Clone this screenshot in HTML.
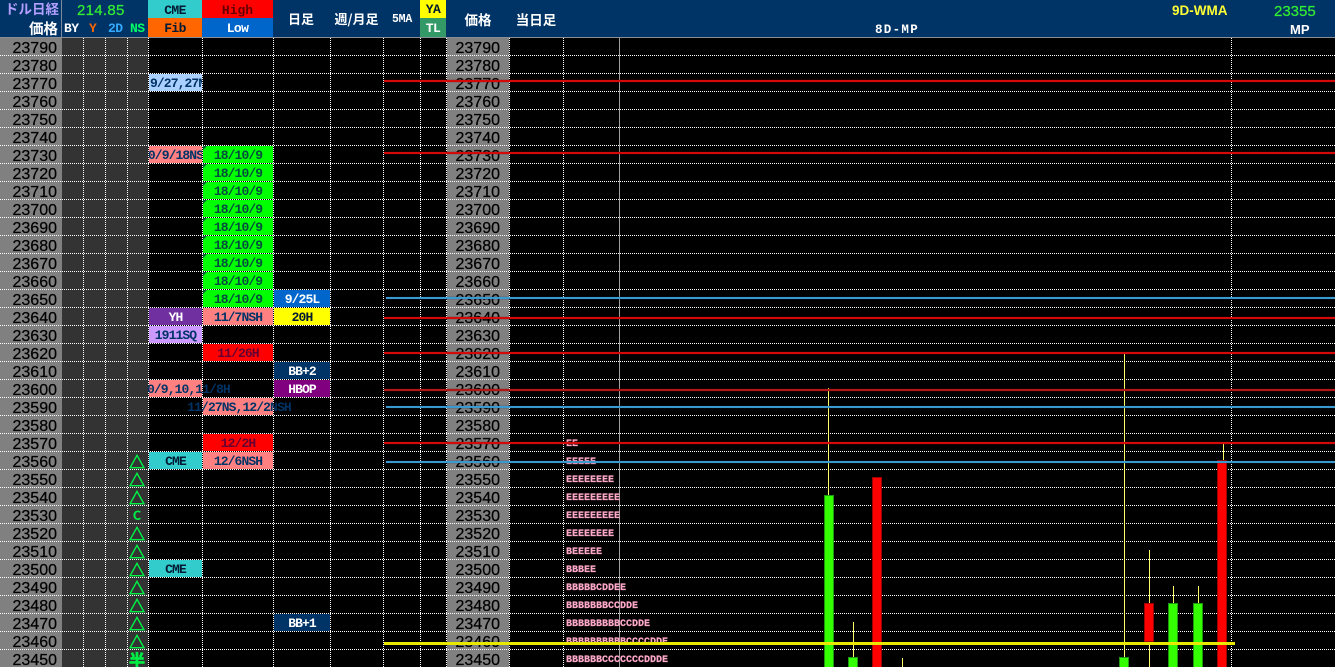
<!DOCTYPE html>
<html lang="ja"><head><meta charset="utf-8"><title>Chart</title>
<style>
html,body{margin:0;padding:0;background:#000}
#p{position:relative;width:1335px;height:667px;overflow:hidden;background:#000;font-family:"Liberation Sans","Noto Sans CJK JP",sans-serif}
#p div{position:absolute}
.hd{left:0;top:0;width:1335px;height:37px;background:#003366;border-bottom:1px solid #8a8f96;box-sizing:content-box}
.pc{top:38px;width:62px;height:629px;background:#808080}
.pr{left:0;width:57px;height:18px;line-height:21px;text-align:right;font-size:16px;color:#000;-webkit-text-stroke:.25px #000}
.pr[style*="left"]{margin-left:-4px}
.l{font:bold 13px/18px "Liberation Mono","Noto Sans CJK JP",monospace;letter-spacing:-.6px;white-space:nowrap;text-align:center}
.c{height:17px;overflow:hidden;font:bold 13px/20px "Liberation Mono",monospace;letter-spacing:-.9px;text-align:center;white-space:nowrap;display:flex;justify-content:center}
.n{color:#003366}.w{color:#fff}.k{color:#001a33}
.g{left:203px;width:70px;background:#00ff00;color:#004d40}
.g::before{content:"";position:absolute;left:0;top:0;border-top:4px solid #006633;border-right:4px solid transparent}
.a{left:149px;width:53px}.b{left:203px;width:70px}.d{left:274px;width:56px}
.pk{background:#ff8080}.rd{background:#ff0000;color:#660033}
.h{left:0;width:1335px;height:1px;background:repeating-linear-gradient(90deg,#fff 0 1px,transparent 1px 2px)}
.v{top:38px;width:1px;height:629px;background:repeating-linear-gradient(180deg,#fff 0 1px,transparent 1px 2px)}
.t{left:124px;width:26px;height:18px;text-align:center;color:#00ee44;font:bold 16px/18px "Noto Sans CJK JP",sans-serif;-webkit-text-stroke:.7px #00ee44}
.m{left:566px;height:18px;margin-top:2px;font:bold 10px/18px "Liberation Mono",monospace;color:#ffa8c8;white-space:nowrap;-webkit-text-stroke:.2px #ffa8c8}
.r{left:384px;width:951px;height:2px;background:#d40a0a;box-shadow:0 0 1px #800}
.bl{left:386px;width:949px;height:2px;background:#3a9ad0;box-shadow:0 0 1px #136}
.wk{width:1px;background:#ffff66}
.cg{width:8px;background:#33ff00;border:1px solid #1f9a10;border-bottom:0}
.cr{width:8px;background:#ff0000;border:1px solid #a00000;border-bottom:0}
</style></head><body><div id="p">
<div class="hd"></div>
<div style="left:61px;top:0;width:1px;height:37px;background:#7a8ba0"></div>
<div style="left:148px;top:0;width:54px;height:18px;background:#33cccc"></div>
<div style="left:148px;top:18px;width:54px;height:19px;background:#ff6600"></div>
<div style="left:202px;top:0;width:71px;height:18px;background:#ff0000"></div>
<div style="left:202px;top:18px;width:71px;height:19px;background:#0066cc"></div>
<div style="left:420px;top:0;width:26px;height:18px;background:#ffff00"></div>
<div style="left:420px;top:18px;width:26px;height:19px;background:#339966"></div>
<div style="left:0;top:1px;width:59px;height:18px;line-height:18px;text-align:right;color:#b4a0ff;font-size:13.5px;font-weight:bold;white-space:nowrap">ドル日経</div>
<div style="left:0;top:21px;width:58px;height:18px;line-height:18px;text-align:right;color:#fff;font-size:14.5px;font-weight:bold">価格</div>
<div style="left:77px;top:2px;height:18px;line-height:18px;color:#33ee33;font-size:15px;letter-spacing:.3px;-webkit-text-stroke:.2px #33ee33">214.85</div>
<div class="l w" style="left:64px;top:20px">BY</div>
<div class="l" style="left:89px;top:20px;color:#ff6600">Y</div>
<div class="l" style="left:108px;top:20px;color:#33aaff">2D</div>
<div class="l" style="left:130px;top:20px;color:#00ff66">NS</div>
<div class="l k" style="left:148px;top:2px;width:54px">CME</div>
<div class="l k" style="left:148px;top:20px;width:54px">Fib</div>
<div class="l" style="left:202px;top:2px;width:71px;color:#660000;letter-spacing:0">High</div>
<div class="l w" style="left:202px;top:20px;width:71px">Low</div>
<div class="l w" style="left:280px;top:10px;width:42px;font-size:13px;font-family:'Noto Sans CJK JP',sans-serif;letter-spacing:0">日足</div>
<div class="l w" style="left:330px;top:10px;width:53px;font-size:13px;font-family:'Noto Sans CJK JP',sans-serif;letter-spacing:0">週/月足</div>
<div class="l w" style="left:384px;top:11px;width:36px;font-size:11.5px;letter-spacing:-.2px">5MA</div>
<div class="l k" style="left:420px;top:1px;width:26px">YA</div>
<div class="l w" style="left:420px;top:20px;width:26px">TL</div>
<div class="l w" style="left:450px;top:10px;width:56px;font-size:13.5px;font-family:'Noto Sans CJK JP',sans-serif;letter-spacing:0">価格</div>
<div class="l w" style="left:510px;top:10px;width:52px;font-size:13.5px;font-family:'Noto Sans CJK JP',sans-serif;letter-spacing:0">当日足</div>
<div class="l w" style="left:860px;top:21px;width:74px;font-size:12.5px;letter-spacing:1.3px">8D-MP</div>
<div style="left:1172px;top:2px;height:18px;line-height:18px;font-size:13.5px;font-weight:bold;color:#ffff33;white-space:nowrap">9D-WMA</div>
<div style="left:1274px;top:3px;height:18px;line-height:18px;color:#33ee33;font-size:15px;-webkit-text-stroke:.2px #33ee33">23355</div>
<div style="left:1290px;top:21px;height:18px;line-height:18px;font-size:13px;font-weight:bold;color:#fff">MP</div>

<div class="pc" style="left:0"></div>
<div class="pc" style="left:447px"></div>
<div style="left:62px;top:38px;width:86px;height:629px;background:#333"></div>
<div style="left:619px;top:38px;width:1px;height:629px;background:#a0a0a0"></div>

<div class="c a" style="top:74px;background:#a9d0ff;color:#003366;justify-content:flex-start;text-indent:1px">9/27,27N</div>
<div class="c a pk n" style="top:146px">0/9/18NS</div>
<div class="c a w" style="top:308px;background:#7030a0">YH</div>
<div class="c a n" style="top:326px;background:#cc99ff">1911SQ</div>
<div class="c a pk" style="top:380px"></div>
<div class="c a k" style="top:452px;background:#33cccc">CME</div>
<div class="c a k" style="top:560px;background:#33cccc">CME</div>

<div class="c g" style="top:146px">18/10/9</div>
<div class="c g" style="top:164px">18/10/9</div>
<div class="c g" style="top:182px">18/10/9</div>
<div class="c g" style="top:200px">18/10/9</div>
<div class="c g" style="top:218px">18/10/9</div>
<div class="c g" style="top:236px">18/10/9</div>
<div class="c g" style="top:254px">18/10/9</div>
<div class="c g" style="top:272px">18/10/9</div>
<div class="c g" style="top:290px">18/10/9</div>
<div class="c b pk n" style="top:308px">11/7NSH</div>
<div class="c b rd" style="top:344px">11/26H</div>
<div class="c b pk" style="top:398px"></div>
<div class="c b rd" style="top:434px">12/2H</div>
<div class="c b pk n" style="top:452px">12/6NSH</div>

<div class="c d w" style="top:290px;background:#0066cc">9/25L</div>
<div class="c d k" style="top:308px;background:#ffff00">20H</div>
<div class="c d w" style="top:362px;background:#003366">BB+2</div>
<div class="c d w" style="top:380px;background:#800080">HBOP</div>
<div class="c d w" style="top:614px;background:#003366">BB+1</div>

<div class="v" style="left:83px"></div><div class="v" style="left:105px"></div><div class="v" style="left:127px"></div><div class="v" style="left:148px"></div><div class="v" style="left:202px"></div><div class="v" style="left:273px"></div><div class="v" style="left:330px"></div><div class="v" style="left:383px"></div><div class="v" style="left:420px"></div><div class="v" style="left:446px"></div><div class="v" style="left:509px"></div><div class="v" style="left:563px"></div><div class="v" style="left:1231px"></div>

<div class="h" style="top:55px"></div><div class="h" style="top:73px"></div><div class="h" style="top:91px"></div><div class="h" style="top:109px"></div><div class="h" style="top:127px"></div><div class="h" style="top:145px"></div><div class="h" style="top:163px"></div><div class="h" style="top:181px"></div><div class="h" style="top:199px"></div><div class="h" style="top:217px"></div><div class="h" style="top:235px"></div><div class="h" style="top:253px"></div><div class="h" style="top:271px"></div><div class="h" style="top:289px"></div><div class="h" style="top:307px"></div><div class="h" style="top:325px"></div><div class="h" style="top:343px"></div><div class="h" style="top:361px"></div><div class="h" style="top:379px"></div><div class="h" style="top:397px"></div><div class="h" style="top:415px"></div><div class="h" style="top:433px"></div><div class="h" style="top:451px"></div><div class="h" style="top:469px"></div><div class="h" style="top:487px"></div><div class="h" style="top:505px"></div><div class="h" style="top:523px"></div><div class="h" style="top:541px"></div><div class="h" style="top:559px"></div><div class="h" style="top:577px"></div><div class="h" style="top:595px"></div><div class="h" style="top:613px"></div><div class="h" style="top:631px"></div><div class="h" style="top:649px"></div>

<div class="l n" style="left:147px;top:380px;width:86px;letter-spacing:-.9px;line-height:20px;text-align:left;overflow:hidden;height:17px">0/9,10,11/8H</div>
<div class="l n" style="left:186px;top:398px;width:106px;letter-spacing:-.9px;line-height:20px;height:17px">11/27NS,12/2NSH</div>

<div class="t" style="top:452px">△</div><div class="t" style="top:470px">△</div><div class="t" style="top:488px">△</div><div class="t" style="top:506px;font-size:13px;-webkit-text-stroke:0">C</div><div class="t" style="top:524px">△</div><div class="t" style="top:542px">△</div><div class="t" style="top:560px">△</div><div class="t" style="top:578px">△</div><div class="t" style="top:596px">△</div><div class="t" style="top:614px">△</div><div class="t" style="top:632px">△</div><div class="t" style="top:650px">半</div>

<div class="pr" style="top:38px">23790</div><div class="pr" style="top:56px">23780</div><div class="pr" style="top:74px">23770</div><div class="pr" style="top:92px">23760</div><div class="pr" style="top:110px">23750</div><div class="pr" style="top:128px">23740</div><div class="pr" style="top:146px">23730</div><div class="pr" style="top:164px">23720</div><div class="pr" style="top:182px">23710</div><div class="pr" style="top:200px">23700</div><div class="pr" style="top:218px">23690</div><div class="pr" style="top:236px">23680</div><div class="pr" style="top:254px">23670</div><div class="pr" style="top:272px">23660</div><div class="pr" style="top:290px">23650</div><div class="pr" style="top:308px">23640</div><div class="pr" style="top:326px">23630</div><div class="pr" style="top:344px">23620</div><div class="pr" style="top:362px">23610</div><div class="pr" style="top:380px">23600</div><div class="pr" style="top:398px">23590</div><div class="pr" style="top:416px">23580</div><div class="pr" style="top:434px">23570</div><div class="pr" style="top:452px">23560</div><div class="pr" style="top:470px">23550</div><div class="pr" style="top:488px">23540</div><div class="pr" style="top:506px">23530</div><div class="pr" style="top:524px">23520</div><div class="pr" style="top:542px">23510</div><div class="pr" style="top:560px">23500</div><div class="pr" style="top:578px">23490</div><div class="pr" style="top:596px">23480</div><div class="pr" style="top:614px">23470</div><div class="pr" style="top:632px">23460</div><div class="pr" style="top:650px">23450</div>

<div class="pr" style="left:447px;top:38px">23790</div><div class="pr" style="left:447px;top:56px">23780</div><div class="pr" style="left:447px;top:74px">23770</div><div class="pr" style="left:447px;top:92px">23760</div><div class="pr" style="left:447px;top:110px">23750</div><div class="pr" style="left:447px;top:128px">23740</div><div class="pr" style="left:447px;top:146px">23730</div><div class="pr" style="left:447px;top:164px">23720</div><div class="pr" style="left:447px;top:182px">23710</div><div class="pr" style="left:447px;top:200px">23700</div><div class="pr" style="left:447px;top:218px">23690</div><div class="pr" style="left:447px;top:236px">23680</div><div class="pr" style="left:447px;top:254px">23670</div><div class="pr" style="left:447px;top:272px">23660</div><div class="pr" style="left:447px;top:290px">23650</div><div class="pr" style="left:447px;top:308px">23640</div><div class="pr" style="left:447px;top:326px">23630</div><div class="pr" style="left:447px;top:344px">23620</div><div class="pr" style="left:447px;top:362px">23610</div><div class="pr" style="left:447px;top:380px">23600</div><div class="pr" style="left:447px;top:398px">23590</div><div class="pr" style="left:447px;top:416px">23580</div><div class="pr" style="left:447px;top:434px">23570</div><div class="pr" style="left:447px;top:452px">23560</div><div class="pr" style="left:447px;top:470px">23550</div><div class="pr" style="left:447px;top:488px">23540</div><div class="pr" style="left:447px;top:506px">23530</div><div class="pr" style="left:447px;top:524px">23520</div><div class="pr" style="left:447px;top:542px">23510</div><div class="pr" style="left:447px;top:560px">23500</div><div class="pr" style="left:447px;top:578px">23490</div><div class="pr" style="left:447px;top:596px">23480</div><div class="pr" style="left:447px;top:614px">23470</div><div class="pr" style="left:447px;top:632px">23460</div><div class="pr" style="left:447px;top:650px">23450</div>

<div class="m" style="top:434px">EE</div>
<div class="m" style="top:452px">EEEEE</div>
<div class="m" style="top:470px">EEEEEEEE</div>
<div class="m" style="top:488px">EEEEEEEEE</div>
<div class="m" style="top:506px">EEEEEEEEE</div>
<div class="m" style="top:524px">EEEEEEEE</div>
<div class="m" style="top:542px">BEEEEE</div>
<div class="m" style="top:560px">BBBEE</div>
<div class="m" style="top:578px">BBBBBCDDEE</div>
<div class="m" style="top:596px">BBBBBBBCCDDE</div>
<div class="m" style="top:614px">BBBBBBBBBCCDDE</div>
<div class="m" style="top:632px">BBBBBBBBBBCCCCDDE</div>
<div class="m" style="top:650px">BBBBBBCCCCCCCDDDE</div>

<div class="wk" style="left:828px;top:388px;height:107px"></div>
<div class="cg" style="left:824px;top:495px;height:172px"></div>
<div class="wk" style="left:853px;top:622px;height:35px"></div>
<div class="cg" style="left:848px;top:657px;height:10px"></div>
<div class="cr" style="left:872px;top:477px;height:190px"></div>
<div class="wk" style="left:902px;top:658px;height:9px"></div>
<div class="wk" style="left:1124px;top:353px;height:304px"></div>
<div class="cg" style="left:1119px;top:657px;height:10px"></div>
<div class="wk" style="left:1149px;top:550px;height:117px"></div>
<div class="cr" style="left:1144px;top:603px;height:37px;border-bottom:1px solid #a00000"></div>
<div class="wk" style="left:1173px;top:586px;height:17px"></div>
<div class="cg" style="left:1168px;top:603px;height:64px"></div>
<div class="wk" style="left:1198px;top:586px;height:17px"></div>
<div class="cg" style="left:1193px;top:603px;height:64px"></div>
<div class="wk" style="left:1223px;top:443px;height:17px"></div>
<div class="cr" style="left:1217px;top:460px;height:207px"></div>

<div class="r" style="top:80px"></div>
<div class="r" style="top:152px"></div>
<div class="bl" style="top:297px"></div>
<div class="r" style="top:317px"></div>
<div class="r" style="top:352px"></div>
<div class="r" style="top:389px;background:#b01818"></div>
<div class="bl" style="top:406px"></div>
<div class="r" style="top:442px"></div>
<div class="bl" style="top:461px"></div>
<div style="left:384px;top:642px;width:851px;height:3px;background:#e8e800"></div>
</div></body></html>
